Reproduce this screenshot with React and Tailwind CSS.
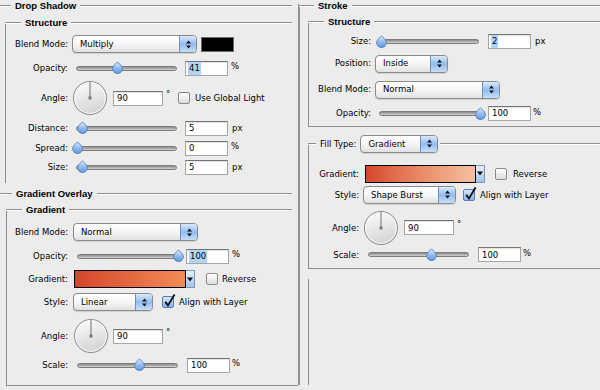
import React from "react";

// shared svg gradients (thumb, dial)
function Defs() {
  return (
    <svg width="0" height="0" className="block h-0 w-0 shrink-0 overflow-hidden">
      <defs>
        <linearGradient id="thumbFill" x1="0" y1="0" x2="0" y2="1">
          <stop offset="0" stopColor="#e2eefc" />
          <stop offset="0.55" stopColor="#8fb9ef" />
          <stop offset="1" stopColor="#5f98e2" />
        </linearGradient>
        <linearGradient id="dialFill" x1="0" y1="0" x2="0.3" y2="1">
          <stop offset="0" stopColor="#fdfdfd" />
          <stop offset="1" stopColor="#d6d6d6" />
        </linearGradient>
      </defs>
    </svg>
  );
}

function Heading({ lead, className = "", children }) {
  return (
    <div className={`flex h-[12px] items-center ${className}`}>
      <span className={`h-[2px] border-t border-[#8f8f8f] bg-white ${lead}`} />
      <span className="px-[4px] font-['Liberation_Sans',Arial,sans-serif] text-[9.5px] font-bold">{children}</span>
      <span className="h-[2px] flex-1 border-t border-[#8f8f8f] bg-white" />
    </div>
  );
}

function Group({ title, lead = "w-[16px]", titleClass = "", className = "", children }) {
  return (
    <div className={`flex flex-col border-l border-[#8f8f8f] ${className}`}>
      <div className={`-ml-px -mt-[5px] flex h-[12px] items-center ${titleClass}`}>
        <span className={`h-[2px] border-t border-[#8f8f8f] bg-white ${lead}`} />
        <span className="px-[4px] font-['Liberation_Sans',Arial,sans-serif] text-[9.5px] font-bold">{title}</span>
        <span className="h-[2px] flex-1 border-t border-[#8f8f8f] bg-white" />
      </div>
      {children}
    </div>
  );
}

function Row({ label, lw, className = "", children }) {
  return (
    <div className={`flex items-center ${className}`}>
      <span className={`shrink-0 text-right ${lw}`}>{label}</span>
      {children}
    </div>
  );
}

function Select({ value, className = "" }) {
  return (
    <div className={`flex h-[18px] shrink-0 overflow-hidden rounded-[4px] border border-[#8b8b8b] bg-linear-to-b from-white via-[#f6f6f6] to-[#e1e1e1] shadow-[0_1px_1px_rgba(0,0,0,0.12)] ${className}`}>
      <span className="flex flex-1 items-center pl-[7px]">{value}</span>
      <span className="flex w-[17px] items-center justify-center border-l border-[#6f8fbd] bg-linear-to-b from-[#dbe9fb] via-[#92bcf0] to-[#c6defa]">
        <svg width="7" height="11" viewBox="0 0 7 11">
          <path d="M1 4.5L3.5 1.5L6 4.5Z M1 6.5L3.5 9.5L6 6.5Z" fill="#111" />
        </svg>
      </span>
    </div>
  );
}

function Slider({ pos, className = "" }) {
  return (
    <div className={`relative flex h-[18px] shrink-0 items-center ${className}`}>
      <div className="h-[5px] w-full rounded-full border border-[#7c7c7c] bg-linear-to-b from-[#8a8a8a] to-[#d2d2d2]" />
      <svg
        className="absolute top-[2px]"
        style={{ left: pos - 5.5 }}
        width="11"
        height="13"
        viewBox="0 0 11 13"
      >
        <path d="M5.5 0.8L9.6 5A4.9 4.9 0 1 1 1.4 5Z" fill="url(#thumbFill)" stroke="#4c79b6" strokeWidth="0.8" />
      </svg>
    </div>
  );
}

function Field({ value, selected, className = "" }) {
  return (
    <div className={`flex h-[15px] shrink-0 items-stretch border border-[#a5a5a5] border-t-[#737373] bg-white pl-[2px] shadow-[inset_0_1px_1px_rgba(0,0,0,0.12)] ${className}`}>
      <span className={`flex items-center px-[1px] ${selected ? "bg-[#b4d3fa]" : ""}`}>{value}</span>
    </div>
  );
}

function Check({ checked, className = "" }) {
  return (
    <span
      className={`relative h-[12px] w-[12px] shrink-0 rounded-[2px] border ${
        checked
          ? "border-[#5b7fae] bg-linear-to-b from-[#d6e7fb] to-[#87b4ec]"
          : "border-[#8c8c8c] bg-linear-to-b from-white to-[#dedede]"
      } ${className}`}
    >
      {checked && (
        <svg className="absolute -top-[4px] left-0" width="13" height="15" viewBox="0 0 13 15">
          <path d="M2.2 8.8L5 12.4L11.6 1.6" stroke="#111" strokeWidth="1.9" fill="none" />
        </svg>
      )}
    </span>
  );
}

function Dial({ className = "" }) {
  return (
    <svg className={`shrink-0 ${className}`} width="36" height="36" viewBox="0 0 36 36">
      <circle cx="18" cy="18" r="17.2" fill="#c9c9c9" opacity="0.5" />
      <circle cx="18" cy="18" r="16.5" fill="url(#dialFill)" stroke="#8d8d8d" />
      <circle cx="18" cy="18" r="15.5" fill="none" stroke="#fff" strokeOpacity="0.8" />
      <line x1="18" y1="18" x2="18" y2="2" stroke="#707070" />
      <rect x="16.5" y="16.5" width="3" height="3" fill="#777" />
    </svg>
  );
}

function Swatch({ className = "", grad }) {
  return (
    <div className={`flex h-[18px] shrink-0 ${className}`}>
      <div className={`flex-1 border border-black ${grad}`} />
      <div className="flex w-[9px] items-center justify-center border border-l-0 border-[#7f97b7] bg-linear-to-b from-[#e6f0fc] to-[#9ec3f1]">
        <svg width="6" height="5" viewBox="0 0 6 5">
          <path d="M0 0.5H6L3 4.5Z" fill="#111" />
        </svg>
      </div>
    </div>
  );
}

function Deg({ className = "" }) {
  return <span className={`w-[4px] self-start ${className}`}>°</span>;
}

export default function App() {
  return (
    <div className="flex h-[390px] w-[600px] overflow-hidden bg-[#ececec] font-['DejaVu_Sans',sans-serif] text-[8.5px] leading-none text-black">
      <Defs />

      {/* LEFT: drop shadow + gradient overlay */}
      <div className="flex w-[299px] shrink-0">
        <div className="flex w-[298px] flex-col">
          <Heading lead="w-[11px]" className="mr-[6px]">Drop Shadow</Heading>

          <Group title="Structure" className="ml-[5px] mr-[6px] mt-[10px] h-[161px]">
            <Row label="Blend Mode:" lw="w-[62px]" className="mt-[6px] h-[18px]">
              <Select value="Multiply" className="ml-[4px] w-[125px]" />
              <span className="ml-[4px] h-[15px] w-[33px] border border-[#6b6b6b] bg-black" />
            </Row>
            <Row label="Opacity:" lw="w-[62px]" className="mt-[6px] h-[18px]">
              <Slider pos={41} className="ml-[8px] w-[101px]" />
              <Field value="41" selected className="ml-[8px] w-[43px]" />
              <span className="ml-[3px] self-start pt-[3px]">%</span>
            </Row>
            <Row label="Angle:" lw="w-[62px]" className="mt-[3px] h-[36px]">
              <Dial className="ml-[4px]" />
              <Field value="90" className="ml-[5px] w-[50px]" />
              <Deg className="ml-[3px] mt-[10px]" />
              <Check className="ml-[8px]" />
              <span className="ml-[5px]">Use Global Light</span>
            </Row>
            <Row label="Distance:" lw="w-[62px]" className="mt-[3px] h-[18px]">
              <Slider pos={6} className="ml-[8px] w-[101px]" />
              <Field value="5" className="ml-[8px] w-[43px]" />
              <span className="ml-[4px]">px</span>
            </Row>
            <Row label="Spread:" lw="w-[62px]" className="mt-[2px] h-[18px]">
              <Slider pos={1} className="ml-[8px] w-[101px]" />
              <Field value="0" className="ml-[8px] w-[43px]" />
              <span className="ml-[3px] self-start pt-[3px]">%</span>
            </Row>
            <Row label="Size:" lw="w-[62px]" className="mt-[1px] h-[18px]">
              <Slider pos={6} className="ml-[8px] w-[101px]" />
              <Field value="5" className="ml-[8px] w-[43px]" />
              <span className="ml-[4px]">px</span>
            </Row>
          </Group>

          <Heading lead="w-[12px]" className="mr-[6px] mt-[5px]">Gradient Overlay</Heading>

          <Group title="Gradient" titleClass="mr-[6px]" className="ml-[6px] mt-[9px] h-[177px] border-b">
            <Row label="Blend Mode:" lw="w-[61px]" className="mt-[7px] h-[18px]">
              <Select value="Normal" className="ml-[5px] w-[125px]" />
            </Row>
            <Row label="Opacity:" lw="w-[61px]" className="mt-[6px] h-[18px]">
              <Slider pos={101} className="ml-[9px] w-[101px]" />
              <Field value="100" selected className="ml-[8px] w-[43px]" />
              <span className="ml-[3px] self-start pt-[3px]">%</span>
            </Row>
            <Row label="Gradient:" lw="w-[61px]" className="mt-[5px] h-[18px]">
              <Swatch className="ml-[6px] w-[121px]" grad="bg-linear-to-r from-[#d5442a] to-[#f08b56]" />
              <Check className="ml-[11px]" />
              <span className="ml-[4px]">Reverse</span>
            </Row>
            <Row label="Style:" lw="w-[61px]" className="mt-[5px] h-[18px]">
              <Select value="Linear" className="ml-[5px] w-[80px]" />
              <Check checked className="ml-[9px]" />
              <span className="ml-[5px]">Align with Layer</span>
            </Row>
            <Row label="Angle:" lw="w-[61px]" className="mt-[7px] h-[36px]">
              <Dial className="ml-[5px]" />
              <Field value="90" className="ml-[4px] w-[50px]" />
              <Deg className="ml-[3px] mt-[10px]" />
            </Row>
            <Row label="Scale:" lw="w-[61px]" className="mt-[2px] h-[18px]">
              <Slider pos={62} className="ml-[9px] w-[101px]" />
              <Field value="100" className="ml-[9px] w-[43px]" />
              <span className="ml-[2px] self-start pt-[3px]">%</span>
            </Row>
          </Group>
        </div>
        <div className="mt-[4px] h-[381px] w-px bg-[#8f8f8f]" />
      </div>

      {/* RIGHT: stroke */}
      <div className="flex flex-1 flex-col">
        <Group title="Stroke" lead="w-[15px]" className="mt-[5px] h-[380px]">
          <Group title="Structure" className="ml-[8px] mt-[9px] h-[110px] border-b">
            <Row label="Size:" lw="w-[62px]" className="mt-[5px] h-[18px]">
              <Slider pos={4} className="ml-[6px] w-[102px]" />
              <Field value="2" selected className="ml-[9px] w-[43px]" />
              <span className="ml-[4px]">px</span>
            </Row>
            <Row label="Position:" lw="w-[62px]" className="mt-[4px] h-[18px]">
              <Select value="Inside" className="ml-[4px] w-[73px]" />
            </Row>
            <Row label="Blend Mode:" lw="w-[62px]" className="mt-[8px] h-[18px]">
              <Select value="Normal" className="ml-[4px] w-[125px]" />
            </Row>
            <Row label="Opacity:" lw="w-[62px]" className="mt-[6px] h-[18px]">
              <Slider pos={101} className="ml-[8px] w-[101px]" />
              <Field value="100" className="ml-[8px] w-[43px]" />
              <span className="ml-[2px] self-start pt-[3px]">%</span>
            </Row>
          </Group>

          <div className="ml-[8px] mt-[16px] flex h-[130px] flex-col border-b border-l border-[#8f8f8f]">
            <div className="-ml-px -mt-[8px] flex h-[18px] items-center">
              <span className="h-[2px] w-[8px] border-t border-[#8f8f8f] bg-white" />
              <span className="ml-[4px]">Fill Type:</span>
              <Select value="Gradient" className="ml-[4px] w-[78px]" />
              <span className="ml-[2px] h-[2px] flex-1 border-t border-[#8f8f8f] bg-white" />
            </div>
            <Row label="Gradient:" lw="w-[50px]" className="mt-[12px] h-[18px]">
              <Swatch className="ml-[6px] w-[120px]" grad="bg-linear-to-r from-[#d6462b] via-[#e98a66] to-[#f4c0a0]" />
              <Check className="ml-[10px]" />
              <span className="ml-[6px]">Reverse</span>
            </Row>
            <Row label="Style:" lw="w-[50px]" className="mt-[3px] h-[18px]">
              <Select value="Shape Burst" className="ml-[4px] w-[93px]" />
              <Check checked className="ml-[7px]" />
              <span className="ml-[5px]">Align with Layer</span>
            </Row>
            <Row label="Angle:" lw="w-[50px]" className="mt-[6px] h-[36px]">
              <Dial className="ml-[4px]" />
              <Field value="90" className="ml-[5px] w-[50px]" />
              <Deg className="ml-[3px] mt-[10px]" />
            </Row>
            <Row label="Scale:" lw="w-[50px]" className="h-[18px]">
              <Slider pos={63} className="ml-[9px] w-[101px]" />
              <Field value="100" className="ml-[9px] w-[43px]" />
              <span className="ml-[2px] self-start pt-[3px]">%</span>
            </Row>
          </div>

          <div className="ml-[8px] mt-[10px] h-[110px] border-l border-[#8f8f8f]" />
        </Group>
      </div>
    </div>
  );
}
